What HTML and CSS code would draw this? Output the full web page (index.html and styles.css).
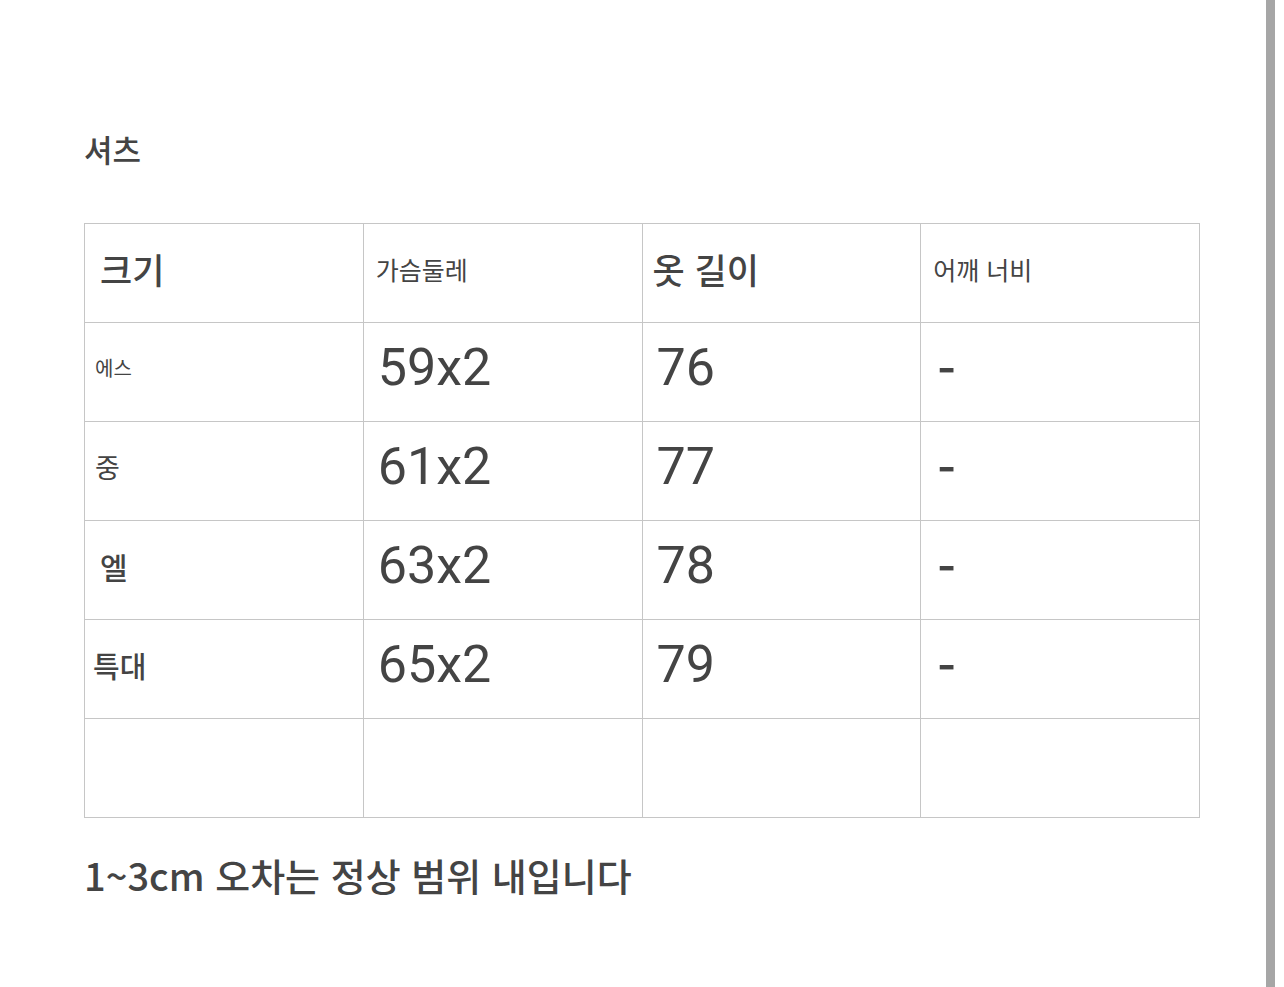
FILE: index.html
```html
<!DOCTYPE html>
<html lang="ko">
<head>
<meta charset="utf-8">
<title>셔츠</title>
<link rel="stylesheet" href="styles.css">
</head>
<body>
<div class="layout">
  <main class="page">
    <h2 class="title">셔츠</h2>
    <table class="size-table">
      <tr>
        <td><span class="t-head-lg pad-l">크기</span></td>
        <td><span class="t-head-sm">가슴둘레</span></td>
        <td><span class="t-head-lg">옷 길이</span></td>
        <td><span class="t-head-sm">어깨 너비</span></td>
      </tr>
      <tr>
        <td><span class="t-s">에스</span></td>
        <td><span class="t-num">59x2</span></td>
        <td><span class="t-num">76</span></td>
        <td><span class="t-dash">-</span></td>
      </tr>
      <tr>
        <td><span class="t-m">중</span></td>
        <td><span class="t-num">61x2</span></td>
        <td><span class="t-num">77</span></td>
        <td><span class="t-dash">-</span></td>
      </tr>
      <tr>
        <td><span class="t-l">엘</span></td>
        <td><span class="t-num">63x2</span></td>
        <td><span class="t-num">78</span></td>
        <td><span class="t-dash">-</span></td>
      </tr>
      <tr>
        <td><span class="t-xl">특대</span></td>
        <td><span class="t-num">65x2</span></td>
        <td><span class="t-num">79</span></td>
        <td><span class="t-dash">-</span></td>
      </tr>
      <tr>
        <td></td>
        <td></td>
        <td></td>
        <td></td>
      </tr>
    </table>
    <p class="note">1~3cm 오차는 정상 범위 내입니다</p>
  </main>
  <div class="scrollbar"></div>
</div>
</body>
</html>
```

FILE: styles.css
```css
html, body {
  margin: 0;
  padding: 0;
  background: #ffffff;
}

body {
  font-family: "Noto Sans CJK KR", "Noto Sans", sans-serif;
  color: #444444;
}

.layout {
  display: flex;
  min-height: 987px;
}

.page {
  flex: 1;
  padding: 126px 0 0 84px;
}

.scrollbar {
  width: 9px;
  background: #a6a6a6;
  margin-right: 9px;
}

.title {
  margin: 0;
  font-size: 31px;
  font-weight: 500;
  line-height: 46px;
}

.size-table {
  margin-top: 51px;
  width: 1116px;
  border-collapse: collapse;
  table-layout: fixed;
}

.size-table td {
  border: 1px solid #c6c6c6;
  height: 99px;
  padding: 0 10px 8px 10px;
  vertical-align: middle;
  box-sizing: border-box;
  line-height: 1.2;
}

.t-head-lg {
  font-size: 35px;
  font-weight: 500;
}

.pad-l {
  margin-left: 5px;
}

.t-head-sm {
  font-size: 25px;
  font-weight: 400;
  margin-left: 2px;
}

.t-s {
  font-size: 20px;
}

.t-m {
  font-size: 27px;
}

.t-l {
  font-size: 30px;
  font-weight: 500;
  margin-left: 5px;
}

.t-xl {
  font-size: 29px;
  font-weight: 500;
  margin-left: -2px;
}

.t-num {
  font-family: Roboto, "Noto Sans CJK KR", sans-serif;
  font-size: 52px;
  font-weight: 400;
  margin-left: 4px;
}

.t-dash {
  font-size: 52px;
  font-weight: 500;
  margin-left: 6px;
}

.note {
  margin: 29px 0 0 0;
  font-size: 38px;
  font-weight: 500;
  line-height: 56px;
}
```
